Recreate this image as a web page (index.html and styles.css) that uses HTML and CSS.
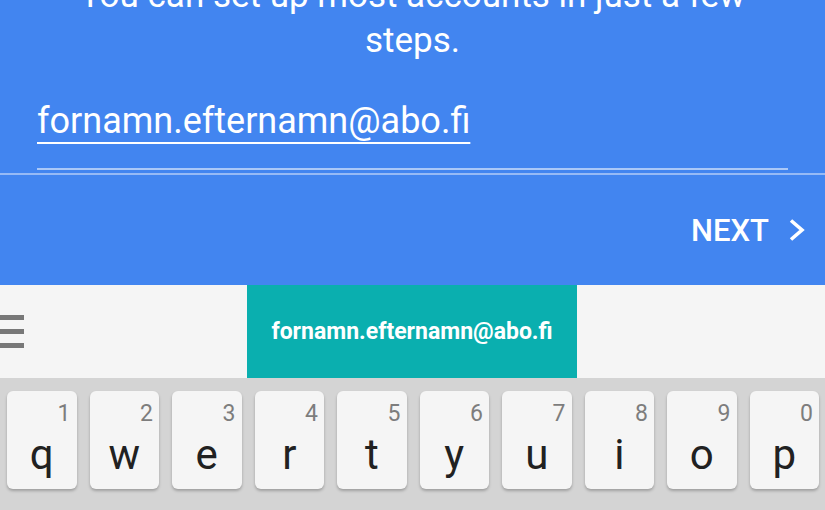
FILE: index.html
```html
<!DOCTYPE html>
<html lang="en">
<head>
    <meta charset="UTF-8">
    <meta name="viewport" content="width=device-width, initial-scale=1.0">
    <title>Add account</title>
    <link rel="stylesheet" href="styles.css">
</head>
<body>
    <main>
        <section class="setup">
            <p class="intro">You can set up most accounts in just a few steps.</p>

            <div class="field">
                <span class="field-value">fornamn.efternamn@abo.fi</span>
            </div>
            <div class="divider"></div>

            <div class="actions">
                <button class="next">
                    NEXT
                    <svg width="18" height="22" viewBox="0 0 18 22">
                        <path d="M3 1.5 L14 11 L3 20.5" fill="none" stroke="#fff" stroke-width="3.6"/>
                    </svg>
                </button>
            </div>
        </section>

        <div class="suggestions">
            <div class="menu">
                <span></span>
                <span></span>
                <span></span>
            </div>
            <div class="suggestion">fornamn.efternamn@abo.fi</div>
        </div>

        <div class="keyboard">
            <div class="key"><sup>1</sup><span>q</span></div>
            <div class="key"><sup>2</sup><span>w</span></div>
            <div class="key"><sup>3</sup><span>e</span></div>
            <div class="key"><sup>4</sup><span>r</span></div>
            <div class="key"><sup>5</sup><span>t</span></div>
            <div class="key"><sup>6</sup><span>y</span></div>
            <div class="key"><sup>7</sup><span>u</span></div>
            <div class="key"><sup>8</sup><span>i</span></div>
            <div class="key"><sup>9</sup><span>o</span></div>
            <div class="key"><sup>0</sup><span>p</span></div>
        </div>
    </main>
</body>
</html>
```

FILE: styles.css
```css
*{
    box-sizing: border-box;
}
body{
    margin: 0;
    padding: 0;
    font-family: Roboto, 'Noto Sans', sans-serif;
    overflow: hidden;
}
main{
    width: 825px;
    height: 510px;
    overflow: hidden;
    background: rgb(212 212 212);
}
.setup{
    height: 285px;
    display: flex;
    flex-direction: column;
    background: rgb(66 133 240);
    color: rgb(255 255 255);
    overflow: hidden;
}
.intro{
    margin: -27px auto 0;
    width: 720px;
    font-size: 35px;
    line-height: 45px;
    text-align: center;
}
.field{
    margin: 38px 37px 0;
    padding-bottom: 27px;
    border-bottom: 2px solid rgb(170 200 248);
}
.field-value{
    font-size: 36px;
    line-height: 40px;
    text-decoration: underline;
    text-decoration-thickness: 2px;
    text-underline-offset: 9px;
}
.divider{
    margin-top: 3px;
    height: 2px;
    background: rgb(150 186 246);
}
.actions{
    flex: 1;
    display: flex;
    align-items: center;
    justify-content: flex-end;
    padding-right: 19px;
}
.next{
    display: flex;
    align-items: center;
    gap: 19px;
    background: none;
    border: 0;
    padding: 0;
    color: rgb(255 255 255);
    font-family: inherit;
    font-size: 31px;
    font-weight: 500;
}
.suggestions{
    height: 93px;
    display: flex;
    align-items: center;
    background: rgb(245 245 245);
}
.menu{
    width: 247px;
    display: flex;
    flex-direction: column;
    gap: 9px;
}
.menu span{
    display: block;
    width: 24px;
    height: 5px;
    background: rgb(120 120 120);
}
.suggestion{
    width: 330px;
    height: 100%;
    display: grid;
    place-items: center;
    background: rgb(10 175 175);
    color: rgb(255 255 255);
    font-size: 23px;
    font-weight: 700;
}
.keyboard{
    display: grid;
    grid-template-columns: repeat(10, 1fr);
    padding-top: 13px;
}
.key{
    position: relative;
    margin: 0 6px 0 7px;
    height: 98px;
    border-radius: 6px;
    background: rgb(245 245 245);
    box-shadow: 0 2px 3px rgba(0,0,0,0.25);
    text-align: center;
}
.key sup{
    position: absolute;
    top: 10px;
    right: 6px;
    font-size: 23px;
    line-height: 26px;
    color: rgb(125 125 125);
}
.key span{
    display: block;
    padding-top: 40px;
    font-size: 42px;
    line-height: 48px;
    color: rgb(33 33 33);
}
```
